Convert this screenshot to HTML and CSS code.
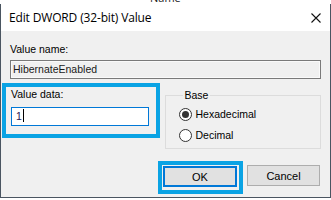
FILE: index.html
```html
<!DOCTYPE html>
<html lang="en">
<head>
  <meta charset="UTF-8">
  <title>Edit DWORD (32-bit) Value</title>
  <link rel="stylesheet" href="styles.css">
</head>
<body>

<div class="behind"><span class="behind-text">Name</span></div>

<div class="dialog">
  <div class="titlebar">
    <span class="title">Edit DWORD (32-bit) Value</span>
    <svg class="close" width="10" height="10" viewBox="0 0 10 10">
      <path d="M0.5 0.5 L9.5 9.5 M9.5 0.5 L0.5 9.5" stroke="#111" stroke-width="1.1" fill="none"/>
    </svg>
  </div>

  <div class="content">
    <div class="lbl">Value name:</div>
    <div class="textbox readonly">HibernateEnabled</div>

    <div class="mid">
      <div class="mark data-group">
        <div class="lbl">Value data:</div>
        <div class="textbox focused">1<span class="caret"></span></div>
      </div>

      <fieldset class="base">
        <legend>Base</legend>
        <div class="radio"><span class="dot checked"></span>Hexadecimal</div>
        <div class="radio"><span class="dot"></span>Decimal</div>
      </fieldset>
    </div>

    <div class="buttons">
      <div class="mark ok-mark"><button class="btn default">OK</button></div>
      <button class="btn cancel">Cancel</button>
    </div>
  </div>
</div>

<div class="below"></div>

</body>
</html>
```

FILE: styles.css
```css
body { margin: 0; width: 331px; height: 200px; overflow: hidden; background: #fff; font-family: "Liberation Sans", Arial, sans-serif; font-size: 10.5px; color: #000; }
.behind { height: 4px; overflow: hidden; padding-left: 150px; }
.behind-text { display: block; margin-top: -9px; font-family: "Open Sans", sans-serif; font-size: 11px; line-height: 13px; color: #222; }
.dialog { border: 1px solid #4a5561; border-top: none; background: #f0f0f0; }
.titlebar { height: 27px; background: #fff; display: flex; align-items: center; justify-content: space-between; padding: 0 9px 0 8px; }
.title { font-family: "Open Sans", sans-serif; font-size: 12px; letter-spacing: -0.15px; color: #000; }
.close { display: block; margin-top: 1px; }
.content { padding: 12px 9px 3px 9px; }
.lbl { line-height: 13px; }
.textbox { box-sizing: border-box; height: 19px; line-height: 17px; padding-left: 2px; white-space: nowrap; }
.readonly { margin-top: 4px; border: 1px solid #7a7a7a; box-shadow: inset 0 0 0 1px #fafafa; background: #f0f0f0; color: #1a1a1a; }
.focused { margin-top: 6px; width: 138px; border: 1px solid #0078d7; background: #fff; padding-left: 4px; color: #2c1650; }
.caret { display: inline-block; width: 1px; height: 13px; background: #000; vertical-align: -2px; margin-left: 1px; }
.mid { display: flex; align-items: flex-start; gap: 5px; margin: 4px 0 0 -8px; }
.mark { border: 4px solid #0aa3e4; }
.data-group { width: 146px; padding: 1px 3px 8px 5px; box-sizing: content-box; }
.data-group .textbox { width: 138px; }
.base { margin: 6px 0 0 0; width: 161px; box-sizing: border-box; border: 1px solid #dcdcdc; padding: 6px 0 6px 13px; display: flex; flex-direction: column; gap: 8px; }
.base legend { padding: 0 2px; margin-left: 4px; line-height: 13px; }
.radio { display: flex; align-items: center; gap: 4px; height: 13px; line-height: 13px; }
.dot { width: 13px; height: 13px; box-sizing: border-box; border: 1px solid #333; border-radius: 50%; background: #fff; display: flex; align-items: center; justify-content: center; }
.dot.checked::after { content: ""; width: 7px; height: 7px; border-radius: 50%; background: #333; }
.buttons { display: flex; justify-content: flex-end; align-items: flex-start; gap: 4px; margin-top: 12px; padding-right: 1px; }
.ok-mark { padding: 1px 2px 3px 1px; }
.btn { box-sizing: border-box; height: 21px; margin: 0; padding: 0; background: #e1e1e1; border: 1px solid #adadad; font-family: "Liberation Sans", Arial, sans-serif; font-size: 11px; color: #000; }
.default { width: 74px; border: 2px solid #0078d7; }
.cancel { width: 73px; margin-top: 4px; }
.below { height: 3px; background: #fff; }
```
